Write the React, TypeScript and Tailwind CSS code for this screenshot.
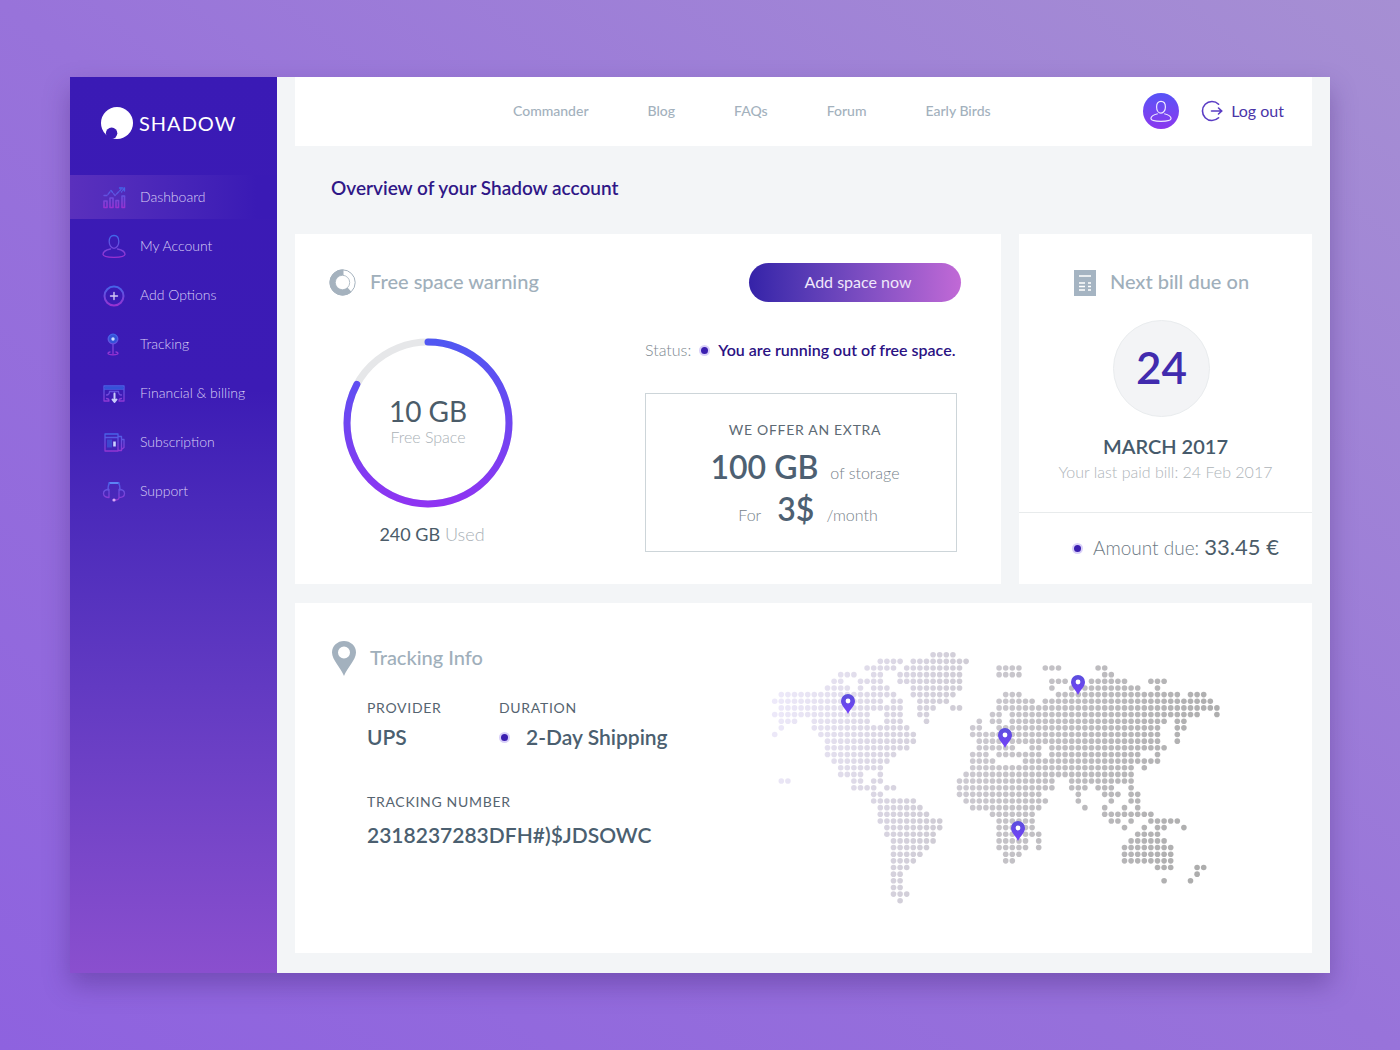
import React from 'react';

// Each row lists the filled column ranges of the dotted world map
const MAP_ROWS: number[][][] = [
  [[24, 27]],
  [[16, 19], [21, 29]],
  [[14, 18], [20, 28], [34, 37], [41, 43], [49, 50]],
  [[10, 12], [15, 16], [19, 28], [34, 37], [50, 51]],
  [[9, 10], [13, 16], [19, 28], [42, 44], [48, 53], [57, 59]],
  [[8, 11], [13, 13], [15, 17], [21, 28], [42, 42], [45, 55], [58, 58]],
  [[1, 18], [21, 27], [35, 37], [43, 61], [63, 65]],
  [[0, 16], [18, 19], [22, 26], [34, 39], [41, 66]],
  [[1, 19], [22, 24], [27, 28], [34, 67]],
  [[0, 14], [17, 19], [22, 23], [33, 34], [36, 64], [67, 67]],
  [[1, 3], [6, 14], [17, 19], [23, 23], [31, 31], [33, 34], [36, 59], [61, 62]],
  [[1, 1], [6, 20], [30, 31], [34, 58], [61, 62]],
  [[0, 0], [7, 21], [30, 58], [61, 61]],
  [[8, 21], [31, 58], [61, 61]],
  [[8, 20], [31, 36], [39, 40], [42, 59]],
  [[8, 18], [30, 32], [34, 40], [42, 55], [58, 58]],
  [[9, 17], [30, 33], [38, 58]],
  [[10, 16], [30, 54], [56, 56]],
  [[10, 13], [16, 16], [29, 54]],
  [[1, 2], [12, 13], [15, 16], [28, 42], [45, 54]],
  [[12, 15], [17, 18], [28, 42], [45, 47], [49, 51], [54, 54]],
  [[15, 16], [28, 40], [46, 46], [50, 52], [54, 55]],
  [[15, 21], [29, 41], [46, 46], [51, 51], [54, 55]],
  [[16, 22], [30, 40], [47, 47], [50, 50], [53, 53], [55, 55]],
  [[16, 23], [33, 39], [50, 57]],
  [[16, 25], [34, 39], [51, 52], [54, 54], [57, 61]],
  [[17, 25], [34, 39], [53, 53], [56, 56], [58, 59], [62, 62]],
  [[17, 24], [34, 40], [55, 58]],
  [[18, 24], [34, 38], [40, 40], [54, 59]],
  [[18, 23], [34, 38], [40, 40], [53, 60]],
  [[18, 22], [35, 37], [53, 60]],
  [[18, 21], [35, 36], [53, 60]],
  [[18, 20], [58, 60], [64, 65]],
  [[18, 19], [64, 64]],
  [[18, 19], [59, 59], [63, 63]],
  [[18, 19]],
  [[18, 20]],
  [[19, 19]],
];

// Tip of every pin, in map units
const MAP_PINS = [
  { x: 77, y: 63 },
  { x: 307, y: 44 },
  { x: 234, y: 97 },
  { x: 247, y: 190 },
];

const PIN_PATH = 'M0 0C-2-5-7-8-7-13a7 7 0 0 1 14 0C7-8 2-5 0 0Z';

const WorldMap: React.FC = () => (
  <svg viewBox="0 0 450 254" className="w-[450px] shrink-0" role="img" aria-label="Shipment locations">
    <defs>
      <linearGradient id="map-dots" gradientUnits="userSpaceOnUse" x1="0" y1="0" x2="450" y2="90">
        <stop offset="0" stopColor="#efebfc" />
        <stop offset="0.3" stopColor="#d9d5e2" />
        <stop offset="0.55" stopColor="#c6c4c9" />
        <stop offset="1" stopColor="#adadad" />
      </linearGradient>
      <linearGradient id="map-pin" x1="0" y1="0" x2="0" y2="1">
        <stop offset="0" stopColor="#5b4fdc" />
        <stop offset="1" stopColor="#7440fa" />
      </linearGradient>
    </defs>
    <g fill="url(#map-dots)">
      {MAP_ROWS.map((ranges, row) =>
        ranges.map(([from, to]) =>
          Array.from({ length: to - from + 1 }, (_, i) => (
            <circle key={`${row}-${from + i}`} cx={3.7 + (from + i) * 6.6} cy={3.7 + row * 6.65} r={2.8} />
          ))
        )
      )}
    </g>
    {MAP_PINS.map((pin) => (
      <g key={pin.x} transform={`translate(${pin.x} ${pin.y})`}>
        <path d={PIN_PATH} fill="url(#map-pin)" />
        <circle cy={-13} r={2.4} fill="#fff" />
      </g>
    ))}
  </svg>
);

interface NavIconProps {
  name: string;
  children: React.ReactNode;
}

const NavIcon: React.FC<NavIconProps> = ({ name, children }) => (
  <svg
    viewBox="0 0 24 24"
    className="size-6 shrink-0"
    fill="none"
    stroke={`url(#nav-${name})`}
    strokeWidth={1.3}
    strokeLinecap="round"
    strokeLinejoin="round"
    aria-hidden="true"
  >
    <defs>
      <linearGradient id={`nav-${name}`} gradientUnits="userSpaceOnUse" x1="0" y1="2" x2="0" y2="23">
        <stop offset="0" stopColor="#3f68ea" />
        <stop offset="1" stopColor="#9a30d0" />
      </linearGradient>
    </defs>
    {children}
  </svg>
);

const PERSON_HEAD = 'M12 1.5c3.300 0 4.800 2.500 4.800 6S15 14.300 12 14.300s-4.800-3.300-4.800-6.800S8.700 1.500 12 1.500Z';
const PERSON_BODY = 'M8.500 15C4 16 1 17.500 1 20.300c0 2.200 4.500 3 11 3s11-.8 11-3c0-2.800-3-4.300-7.500-5.300';

const NAV_ITEMS = [
  {
    label: 'Dashboard',
    icon: (
      <NavIcon name="dashboard">
        <path d="M2 10.500h3l4-5 4 5 6-6M17.500 3h5M22.500 3l-3 4M22.500 3v3.500" strokeDasharray="3 1.500" />
        <path d="M2 16v6.500h3V16zM8 13v9.500h3V13zM14 15.500v7h2.500v-7zM20 11v11.500h2.500V11z" strokeWidth={1.6} />
      </NavIcon>
    ),
  },
  {
    label: 'My Account',
    icon: (
      <NavIcon name="account">
        <path d={PERSON_HEAD} />
        <path d={PERSON_BODY} />
      </NavIcon>
    ),
  },
  {
    label: 'Add Options',
    icon: (
      <NavIcon name="options">
        <circle cx="12" cy="13" r="9.500" strokeWidth={2} />
        <path d="M12 9.500v7M8.500 13h7" stroke="#d5c9f5" strokeWidth={1.4} />
      </NavIcon>
    ),
  },
  {
    label: 'Tracking',
    icon: (
      <NavIcon name="tracking">
        <circle cx="11" cy="7" r="4.800" fill="#3452d8" />
        <path d="M11 12v9.500M8 20c-1.500.3-2 .8-2 1.300 0 .9 2 1.500 5 1.500s5-.6 5-1.500c0-.5-.5-1-2-1.300" />
        <circle cx="11" cy="7" r="1.700" fill="#cfe0ff" stroke="none" />
      </NavIcon>
    ),
  },
  {
    label: 'Financial & billing',
    icon: (
      <NavIcon name="billing">
        <path d="M7 20H2V5h20v15h-5M2 8h20M4.500 14c2 0 3-1.500 3-3.500h9c0 2 1 3.500 3 3.500M4.500 17.500c1.500 0 2.500 1 2.500 2.500M19.500 17.500c-1.500 0-2.500 1-2.500 2.500" />
        <path d="M2.500 5.500h19V8.500h-19z" fill="#3452d8" stroke="none" />
        <path d="M12.500 12.500v8M10.500 18.500l2 2.500 2-2.500" stroke="#c9cdfa" strokeWidth={2} />
      </NavIcon>
    ),
  },
  {
    label: 'Subscription',
    icon: (
      <NavIcon name="subscription">
        <path d="M3 4h13v17H3zM16 6.500h3.500v14H16M19.500 9.500h2.500v8l-2.500 2M3 7.500h13" />
        <path d="M5 9.500h5v8H5z" fill="#3d48cf" stroke="none" />
        <path d="M12.500 11.500v5" stroke="#cbd3ff" strokeWidth={2.6} strokeLinecap="butt" />
      </NavIcon>
    ),
  },
  {
    label: 'Support',
    icon: (
      <NavIcon name="support">
        <path d="M7.500 4h9" stroke="#5c84f5" strokeWidth={2} />
        <path d="M7.500 4C6 6 6 8 6 11M16.500 4C18 6 18 8 18 11M7 10.500v8c-2.500 0-5.500-1-5.500-4s3-4 5.500-4ZM17 10.500v8c2.500 0 5.500-1 5.500-4s-3-4-5.500-4ZM17 18.500c0 2-2 2.500-4 2.500" />
        <circle cx="12" cy="21" r="1.600" fill="#d8a6f5" stroke="none" />
      </NavIcon>
    ),
  },
];

const TOP_LINKS = ['Commander', 'Blog', 'FAQs', 'Forum', 'Early Birds'];

const Dot: React.FC = () => (
  <span className="grid size-[11px] shrink-0 place-items-center rounded-full bg-[#d9d0f9]">
    <span className="size-[7px] rounded-full bg-[#3b1fb0]" />
  </span>
);

interface CardTitleProps {
  icon: React.ReactNode;
  children: React.ReactNode;
}

const CardTitle: React.FC<CardTitleProps> = ({ icon, children }) => (
  <h2 className="flex h-[39px] items-center gap-[14px] text-xl font-medium text-[#a0afbb]">
    {icon}
    <span className="pb-1">{children}</span>
  </h2>
);

const Sidebar: React.FC = () => (
  <aside className="w-[207px] shrink-0 bg-linear-to-b from-[#3a1ab5] via-[#3c1bb5] via-35% to-[#8a4fce]">
    <a href="#" className="flex h-[91px] items-center gap-[6px] pl-[31px] text-xl tracking-wider text-white">
      <svg viewBox="0 0 32 32" className="size-8 shrink-0" aria-hidden="true">
        <mask id="logo-cut">
          <circle cx="16" cy="16" r="16" fill="#fff" />
          <circle cx="10.600" cy="26.300" r="5.700" fill="#000" />
        </mask>
        <path d="M0 0h32v32H0z" fill="#fff" mask="url(#logo-cut)" />
      </svg>
      SHADOW
    </a>
    <nav className="mt-[7px] flex flex-col gap-[5px]">
      {NAV_ITEMS.map((item, i) => (
        <a
          key={item.label}
          href="#"
          aria-current={i === 0 ? 'page' : undefined}
          className={`flex h-11 items-center gap-[14px] pl-8 text-sm font-light text-[#d9cff5] ${
            i === 0 ? 'bg-linear-to-r from-[#5a30bd] to-[#3a1ab5] to-90%' : ''
          }`}
        >
          {item.icon}
          {item.label}
        </a>
      ))}
    </nav>
  </aside>
);

const TopBar: React.FC = () => (
  <header className="flex h-[69px] items-center bg-white pr-7 pb-0.5 pl-[218px]">
    <nav className="flex gap-[59px] text-sm text-[#a3b1bd]">
      {TOP_LINKS.map((link) => (
        <a key={link} href="#" className="font-medium">
          {link}
        </a>
      ))}
    </nav>
    <div className="ml-auto flex items-center gap-[22px]">
      <button
        aria-label="Profile"
        className="flex size-9 items-center justify-center rounded-full bg-linear-to-b from-[#5653f7] to-[#8a36ee]"
      >
        <svg viewBox="0 0 24 24" className="size-[22px]" fill="none" stroke="#efe9ff" strokeWidth={1.3}>
          <path d={PERSON_HEAD} />
          <path d={PERSON_BODY} />
        </svg>
      </button>
      <button className="flex items-center gap-2 text-base text-[#4a35a8]">
        <svg viewBox="0 0 22 22" className="size-[22px]" fill="none" strokeWidth={1.6} strokeLinecap="round">
          <path d="M17.600 4.200A9.500 9.500 0 1 0 17.600 17.800" stroke="#5a3cc4" />
          <path d="M10.500 11h10M17.500 8l3.200 3-3.200 3" stroke="#5a3cc4" />
        </svg>
        Log out
      </button>
    </div>
  </header>
);

const RING_RADIUS = 81;
const RING_LENGTH = 2 * Math.PI * RING_RADIUS;

const SpaceRing: React.FC<{ used: number }> = ({ used }) => (
  <div className="grid size-[170px] place-items-center">
    <svg viewBox="0 0 170 170" className="col-start-1 row-start-1 size-full" fill="none" strokeWidth={7}>
      <defs>
        <linearGradient id="ring" gradientUnits="userSpaceOnUse" x1="0" y1="0" x2="0" y2="170">
          <stop offset="0" stopColor="#4f58f2" />
          <stop offset="1" stopColor="#9033f2" />
        </linearGradient>
      </defs>
      <circle cx="85" cy="85" r={RING_RADIUS} stroke="#e6e7e9" />
      <path
        d="M85 4a81 81 0 0 1 0 162a81 81 0 0 1 0-162"
        stroke="url(#ring)"
        strokeLinecap="round"
        strokeDasharray={`${RING_LENGTH * used} ${RING_LENGTH}`}
      />
    </svg>
    <div className="col-start-1 row-start-1 pb-1 text-center">
      <div className="text-[28px] leading-8 text-[#4b5c69]">10 GB</div>
      <div className="text-base leading-5 font-light text-[#a9b0b6]">Free Space</div>
    </div>
  </div>
);

const FreeSpaceCard: React.FC = () => (
  <section className="flex flex-1 justify-between bg-white pt-[29px] pr-10 pb-8 pl-[34px]">
    <div>
      <CardTitle
        icon={
          <svg viewBox="0 0 27 27" className="size-[27px]" aria-hidden="true">
            <circle cx="13.500" cy="13.500" r="12.700" fill="#fff" stroke="#a5b2be" />
            <path d="M14.500 .5a13 13 0 1 0 8 22.500l-4-4.500-4-13Z" fill="#a5b2be" />
            <circle cx="13.500" cy="13.500" r="7.200" fill="#fff" stroke="#a5b2be" strokeWidth={0.8} />
          </svg>
        }
      >
        Free space warning
      </CardTitle>
      <div className="mt-9 ml-[14px] flex w-[170px] flex-col items-center">
        <SpaceRing used={0.828} />
        <p className="mt-[14px] pl-2 text-lg leading-6 font-light text-[#a9b0b6]">
          <span className="font-normal text-[#4b5c69]">240 GB</span> Used
        </p>
      </div>
    </div>

    <div className="flex w-[316px] flex-col">
      <button className="h-[39px] w-[212px] self-end rounded-full bg-linear-to-r from-[#3522a8] to-[#c169d6] pb-0.5 pl-1.5 text-base text-[#f0e8fb]">
        Add space now
      </button>
      <p className="mt-9 flex items-center text-base leading-6 whitespace-nowrap text-[#7d8890]">
        <span className="mr-2 font-light">Status:</span>
        <Dot />
        <strong className="ml-2 font-semibold text-[#2b1283]">You are running out of free space.</strong>
      </p>
      {/* Upgrade offer */}
      <div className="mt-[31px] w-[312px] border border-[#cdd5d9] pt-6 pb-[21px] pl-2 text-center text-[#76828a]">
        <p className="text-sm leading-6 tracking-wider text-[#5d6a74]">WE OFFER AN EXTRA</p>
        <p className="mt-1 flex h-[42px] items-baseline justify-center gap-3 text-base leading-[42px] font-light">
          <b className="text-[32px] font-semibold text-[#4d6072]">100 GB</b>
          of storage
        </p>
        <p className="flex h-[42px] items-baseline justify-center pl-1.5 text-base leading-[42px] font-light">
          For
          <b className="mr-3 ml-4 text-[32px] font-semibold text-[#4d6072]">3$</b>
          /month
        </p>
      </div>
    </div>
  </section>
);

const BillCard: React.FC = () => (
  <section className="flex w-[293px] flex-col bg-white pt-[29px]">
    <div className="flex flex-col items-center gap-[18px] pr-2">
      <CardTitle
        icon={
          <svg viewBox="0 0 22 26" className="h-[26px] w-[22px]" aria-hidden="true">
            <path d="M0 0h22v26H0z" fill="#a5b4c2" />
            <path d="M5 6h12M5 13h6M5 16.500h6M5 20h6M14 13h3M14 16.500h3M14 20h3" stroke="#fff" strokeWidth={1.4} />
          </svg>
        }
      >
        Next bill due on
      </CardTitle>
      <div className="flex size-[97px] items-center justify-center rounded-full border border-[#e9ecee] bg-[#f3f4f6] pb-1 text-[44px] font-semibold text-[#412bae]">
        24
      </div>
    </div>
    <p className="mt-[15px] text-center text-xl leading-7 font-semibold text-[#465a6b]">MARCH 2017</p>
    <p className="text-center text-base leading-6 font-light text-[#aeb4b9]">Your last paid bill: 24 Feb 2017</p>
    <div className="mt-7 flex flex-1 items-center justify-center gap-[10px] border-t border-[#e8ebec] pl-5">
      <Dot />
      <p className="pb-1 text-[19px] font-light text-[#6d7a85]">
        Amount due: <span className="text-[22px] font-normal text-[#4b5c69]">33.45 €</span>
      </p>
    </div>
  </section>
);

const TrackingCard: React.FC = () => (
  <section className="mt-[19px] flex justify-between bg-white pt-9 pr-[91px] pb-12 pl-[37px]">
    <div>
      <CardTitle
        icon={
          <svg viewBox="0 0 24 35" className="h-[35px] w-6" aria-hidden="true">
            <path
              fillRule="evenodd"
              fill="#a3b1be"
              d="M12 35C9 27 0 19 0 11.500a12 11.500 0 0 1 24 0C24 19 15 27 12 35ZM12 5.500a6 6 0 1 0 0 12 6 6 0 0 0 0-12Z"
            />
          </svg>
        }
      >
        Tracking Info
      </CardTitle>
      <dl className="mt-[18px] grid grid-cols-[132px_auto] pl-[35px] text-[21px] leading-7 font-semibold text-[#4b5f70]">
        <div>
          <dt className="text-sm leading-6 font-normal tracking-wider text-[#566470]">PROVIDER</dt>
          <dd className="mt-[3px]">UPS</dd>
        </div>
        <div>
          <dt className="text-sm leading-6 font-normal tracking-wider text-[#566470]">DURATION</dt>
          <dd className="mt-[3px] flex items-center gap-4">
            <Dot />
            2-Day Shipping
          </dd>
        </div>
        <div className="col-span-2 mt-[39px]">
          <dt className="text-sm leading-6 font-normal tracking-wider text-[#566470]">TRACKING NUMBER</dt>
          <dd className="mt-[7px]">2318237283DFH#)$JDSOWC</dd>
        </div>
      </dl>
    </div>
    <div className="mt-3">
      <WorldMap />
    </div>
  </section>
);

export default function App() {
  return (
    <div className="min-h-screen bg-linear-to-tr from-[#8e62df] via-[#9873da] to-[#a68fd3] px-[5%] py-[77px] font-['Lato','Liberation_Sans',sans-serif]">
      <div className="flex bg-[#f3f5f7] shadow-[0_12px_24px_rgba(60,30,110,0.35)]">
        <Sidebar />
        <main className="min-w-0 flex-1 px-[18px] pb-5">
          <TopBar />
          <h1 className="mb-1 flex h-[84px] items-center pl-9 text-[19px] font-semibold text-[#2f1787]">
            Overview of your Shadow account
          </h1>
          <div className="flex gap-[18px]">
            <FreeSpaceCard />
            <BillCard />
          </div>
          <TrackingCard />
        </main>
      </div>
    </div>
  );
}
